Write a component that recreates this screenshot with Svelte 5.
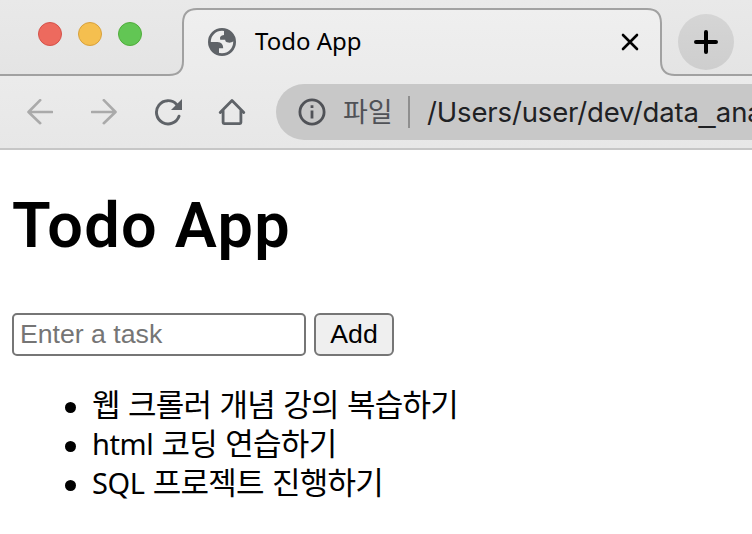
<script>
  let task = $state('');
  let tasks = $state([
    [{ text: '웹 크롤러 개념 강의 복습하기' }],
    [{ text: 'html', latin: true }, { text: ' 코딩 연습하기' }],
    [{ text: 'SQL', latin: true }, { text: ' 프로젝트 진행하기' }]
  ]);

  function add() {
    if (!task.trim()) return;
    tasks.push([{ text: task.trim() }]);
    task = '';
  }
</script>

<div class="window">
  <header>
    <svg class="outline" width="752" height="148" viewBox="0 0 752 148" aria-hidden="true">
      <defs>
        <linearGradient id="bar" x1="0" y1="0" x2="0" y2="1">
          <stop offset="0" stop-color="#efefef" />
          <stop offset="1" stop-color="#e7e7e7" />
        </linearGradient>
      </defs>
      <path d="M0 75H169Q183 75 183 61V23Q183 9 197 9H647Q661 9 661 23V61Q661 75 675 75H752V148H0Z" fill="url(#bar)" />
      <path d="M0 75H169Q183 75 183 61V23Q183 9 197 9H647Q661 9 661 23V61Q661 75 675 75H752" fill="none" stroke="#a1a1a1" stroke-width="2" />
    </svg>
    <div class="tabs">
      <div class="lights"><i class="red"></i><i class="yellow"></i><i class="green"></i></div>
      <div class="tab">
        <svg width="28" height="28" viewBox="0 0 28 28">
          <circle cx="14" cy="14" r="12.6" fill="none" stroke="#5f6368" stroke-width="2.8" />
          <path d="M1.5 14H9.5Q15.3 14.4 15.2 20.2H11V26.5Q2 24.5 1.5 14ZM16 2Q24 3 26.5 12Q24.5 15 20.5 14.6Q17.2 14.4 17.2 11.8H12.2Q11 7.4 16 7Z" fill="#5f6368" />
        </svg>
        <span class="title">Todo App</span>
        <svg class="close" width="18" height="18" viewBox="0 0 18 18"><path d="M2 2L16 16M16 2L2 16" stroke="#000" stroke-width="2.6" stroke-linecap="round" /></svg>
      </div>
      <div class="new"><svg width="24" height="24" viewBox="0 0 24 24"><path d="M12 2V22M2 12H22" stroke="#000" stroke-width="4" stroke-linecap="round" /></svg></div>
    </div>
    <nav>
      <svg width="26" height="26" viewBox="0 0 26 26" class="arrow"><path d="M25 13H2M13.2 1.2L1.5 13L13.2 24.2" /></svg>
      <svg width="26" height="26" viewBox="0 0 26 26" class="arrow"><path d="M1 13H24M12.8 1.2L24.5 13L12.8 24.2" /></svg>
      <svg width="28" height="28" viewBox="0 0 28 28"><path d="M25 18.2A11.6 11.6 0 1 1 22.6 6.4" fill="none" stroke="#5f6368" stroke-width="2.9" stroke-linecap="round" /><path d="M28 1V12H17Z" fill="#5f6368" /></svg>
      <svg width="28" height="28" viewBox="0 0 28 28"><path d="M2.2 14.5L14 2.6L25.8 14.5M5.1 12V24.6Q5.1 25.6 6.1 25.6H21.9Q22.9 25.6 22.9 24.6V12" fill="none" stroke="#5f6368" stroke-width="2.8" stroke-linecap="round" stroke-linejoin="round" /></svg>
      <div class="address">
        <svg width="28" height="28" viewBox="0 0 28 28"><circle cx="14" cy="14" r="12.1" fill="none" stroke="#505257" stroke-width="2.8" /><path d="M12.6 12.6H15.4V20.6H12.6ZM12.6 7.2H15.4V10H12.6Z" fill="#505257" /></svg>
        <span class="scheme">파일</span>
        <span class="divider"></span>
        <span class="url">/Users/user/dev/data<span class="underscore">_</span>ana</span>
      </div>
    </nav>
  </header>

  <main>
    <h1>Todo App</h1>
    <form onsubmit={(e) => { e.preventDefault(); add(); }}>
      <input placeholder="Enter a task" bind:value={task} />
      <button>Add</button>
    </form>
    <ul>
      {#each tasks as parts}
        <li><p>{#each parts as part}<span class:latin={part.latin}>{part.text}</span>{/each}</p></li>
      {/each}
    </ul>
  </main>
</div>

<style>
  .window { width: 752px; height: 534px; overflow: hidden; background: #fff; color: #000; box-sizing: border-box; }
  svg { display: block; flex: none; }
  header { position: relative; height: 150px; box-sizing: border-box; border-bottom: 2px solid #c6c6c6; background: linear-gradient(#e9e9e9, #e4e4e4 76px); }
  .outline { position: absolute; left: 0; top: 0; }
  .tabs { position: relative; display: flex; height: 76px; }
  .lights { display: flex; gap: 16px; width: 182px; padding: 22px 0 0 38px; box-sizing: border-box; }
  .lights i { width: 24px; height: 24px; box-sizing: border-box; border-radius: 50%; border-width: 1px; border-style: solid; }
  .red { background: #ed6a5e; border-color: #d5524a; }
  .yellow { background: #f5bf4f; border-color: #d8a13c; }
  .green { background: #62c654; border-color: #50ad3b; }
  .tab { display: flex; align-items: center; width: 480px; height: 68px; margin-top: 8px; padding: 0 23px 0 26px; box-sizing: border-box; }
  .title { margin-left: 19px; padding-bottom: 2px; font: 24px/32px "Noto Sans", sans-serif; white-space: nowrap; }
  .close { margin-left: auto; }
  .new { display: flex; align-items: center; justify-content: center; width: 56px; height: 56px; margin: 14px 0 0 16px; border-radius: 50%; background: linear-gradient(#d5d5d5, #cecece); }
  nav { position: relative; display: flex; align-items: center; height: 72px; padding-left: 27px; }
  nav > svg { margin-right: 36px; }
  nav > .arrow { margin-right: 38px; }
  nav > .arrow + svg:not(.arrow) { margin-left: -1px; }
  .arrow path { fill: none; stroke: #aaa; stroke-width: 2.6; stroke-linecap: round; stroke-linejoin: round; }
  .address { display: flex; align-items: center; flex: none; width: 520px; height: 56px; margin-left: -6px; padding-left: 22px; box-sizing: border-box; border-radius: 28px 0 0 28px; background: #c8c8c8; white-space: nowrap; overflow: hidden; }
  .scheme { width: 49px; margin-left: 17px; font: 27px/38px "Noto Sans CJK KR", sans-serif; padding-bottom: 2px; color: #505257; }
  .divider { width: 2px; height: 32px; margin: 0 17px 0 16px; background: #8f8f8f; }
  .url { font: 27.5px/40px Inter, sans-serif; color: #202124; letter-spacing: -.15px; }
  .underscore { display: inline-block; width: 17px; font-family: "Liberation Sans", sans-serif; font-size: 30px; line-height: 30px; letter-spacing: 0; }
  main { padding: 0 12px; }
  h1 { margin: 0; padding-top: 36px; font: 600 63px/80px Roboto, sans-serif; letter-spacing: 1.3px; }
  form { display: flex; gap: 8px; margin-top: 47px; }
  input { width: 294px; height: 43px; box-sizing: border-box; padding: 0 6px; border: 2px solid #767676; border-radius: 5px; background: #fff; font: 26.67px "Liberation Sans", Arial, sans-serif; }
  input::placeholder { color: #757575; opacity: 1; }
  button { width: 80px; height: 43px; box-sizing: border-box; padding: 0; border: 2px solid #767676; border-radius: 6px; background: #efefef; color: #000; font: 26.67px "Liberation Sans", Arial, sans-serif; }
  ul { margin: 27px 0 0; padding: 0; list-style: none; }
  li { display: flex; align-items: center; height: 39px; font: 31px/39px "Noto Sans CJK KR", sans-serif; letter-spacing: -.75px; word-spacing: 2px; white-space: pre; }
  p { height: 39px; margin: 0; }
  li::before { content: ''; width: 11px; height: 11px; margin: 9px 16px 0 53px; border-radius: 50%; background: #000; }
  .latin { font-family: "Noto Sans", sans-serif; font-size: 29px; line-height: 30px; letter-spacing: -.4px; }
</style>
